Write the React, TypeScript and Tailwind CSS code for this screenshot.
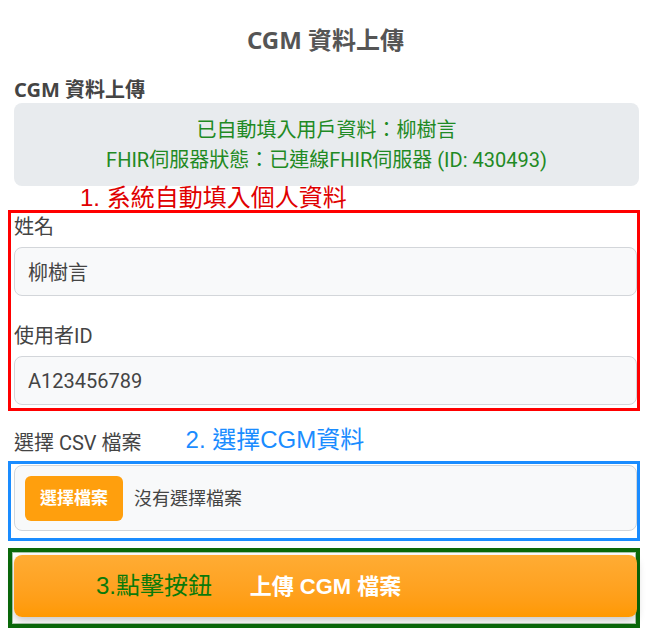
import React from 'react';

const body = { fontFamily: 'Roboto, "Noto Sans CJK TC", sans-serif' };
const heading = { fontFamily: '"Noto Sans", "Noto Sans CJK TC", sans-serif' };
const note = { fontFamily: '"Liberation Sans", "Noto Sans CJK TC", sans-serif' };

function Field({ label, value, last }: { label: string; value: string; last?: boolean }) {
  return (
    <div className={last ? '' : 'mb-[28px]'}>
      <div className="text-[20px] leading-[24px] text-[#444] mb-[8px]">{label}</div>
      <input
        readOnly
        value={value}
        className="block w-full h-[49px] px-[13px] rounded-[8px] border border-[#d3d6da] bg-[#f8f9fa] text-[20px] text-[#444] outline-none"
        style={body}
      />
    </div>
  );
}

export default function App() {
  return (
    <div className="w-[651px] min-h-[634px] bg-white px-[14px] overflow-hidden" style={body}>
      {/* page title */}
      <h1 className="pt-[26px] text-center text-[24px] leading-[28px] font-bold text-[#555]" style={heading}>
        CGM 資料上傳
      </h1>

      <h2 className="mt-[24px] text-[20px] leading-[24px] font-bold text-[#444]" style={heading}>
        CGM 資料上傳
      </h2>

      {/* status box */}
      <div className="mt-[1px] mr-[-2px] rounded-[8px] bg-[#e8ebee] pt-[12px] pb-[11px] text-center text-[20px] leading-[30px] text-[#1f8a24]">
        <div>已自動填入用戶資料：柳樹言</div>
        <div>FHIR伺服器狀態：已連線FHIR伺服器 (ID: 430493)</div>
      </div>

      {/* step 1 */}
      <div className="h-[25px] -mt-[1px] pl-[66px] text-[24px] leading-[25px] text-[#e00000]" style={note}>
        1. 系統自動填入個人資料
      </div>
      <div className="relative pt-[5px] pb-[6px]">
        <div className="pointer-events-none absolute top-0 bottom-0 -left-[6px] -right-[3px] border-[3px] border-[#ff0000]" />
        <Field label="姓名" value="柳樹言" />
        <Field label="使用者ID" value="A123456789" last />
      </div>

      {/* step 2 */}
      <div className="mt-[20px] flex items-center h-[24px] mb-[6px]">
        <span className="text-[20px] leading-[24px] text-[#444]">選擇 CSV 檔案</span>
        <span className="ml-[44px] -mt-[6px] text-[24px] leading-[24px] text-[#1a8cff]" style={note}>
          2. 選擇CGM資料
        </span>
      </div>
      <div className="relative pt-[4px] pb-[10px]">
        <div className="pointer-events-none absolute top-0 bottom-0 -left-[6px] -right-[3px] border-[3px] border-[#1a8cff]" />
        <div className="flex items-center h-[66px] rounded-[8px] border border-[#d3d6da] bg-[#f8f9fa] px-[10px]">
          <button className="h-[45px] px-[15px] rounded-[6px] bg-[#ff9f0d] text-white text-[17px] font-bold" style={heading}>
            選擇檔案
          </button>
          <span className="ml-[11px] text-[18px] text-[#444]">沒有選擇檔案</span>
        </div>
      </div>

      {/* step 3 */}
      <div className="relative mt-[7px] pt-[7px] pb-[11px]">
        <div className="pointer-events-none absolute top-0 bottom-0 -left-[6px] -right-[3px] border-[4px] border-[#0a690a] shadow-[inset_0_0_0_1px_#a9c7a9]" />
        <button className="relative flex items-center w-full h-[62px] rounded-[8px] bg-gradient-to-b from-[#ffac33] to-[#ff9900] shadow-[0_4px_8px_rgba(0,0,0,0.22)]">
          <span className="absolute left-[82px] text-[24px] text-[#0a7a0a]" style={note}>3.點擊按鈕</span>
          <span className="mx-auto text-[22px] font-bold text-white" style={note}>上傳 CGM 檔案</span>
        </button>
      </div>
    </div>
  );
}
